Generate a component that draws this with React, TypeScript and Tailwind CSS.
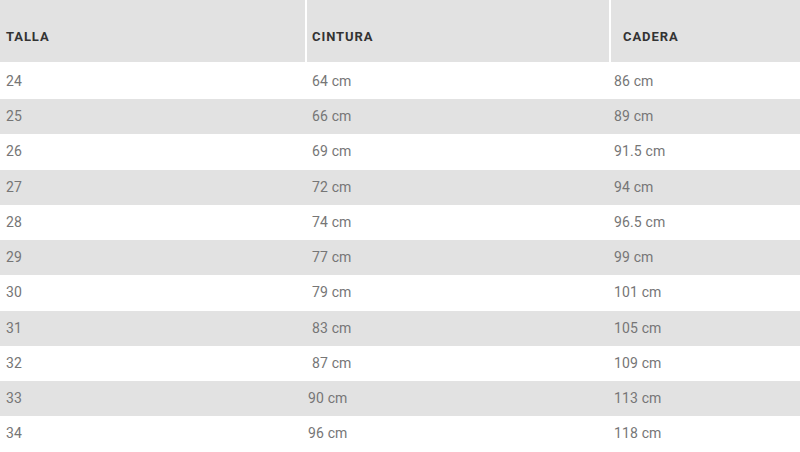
const ROWS = [
  { talla: '24', cintura: '64 cm', cadera: '86 cm' },
  { talla: '25', cintura: '66 cm', cadera: '89 cm' },
  { talla: '26', cintura: '69 cm', cadera: '91.5 cm' },
  { talla: '27', cintura: '72 cm', cadera: '94 cm' },
  { talla: '28', cintura: '74 cm', cadera: '96.5 cm' },
  { talla: '29', cintura: '77 cm', cadera: '99 cm' },
  { talla: '30', cintura: '79 cm', cadera: '101 cm' },
  { talla: '31', cintura: '83 cm', cadera: '105 cm' },
  { talla: '32', cintura: '87 cm', cadera: '109 cm' },
  { talla: '33', cintura: '90 cm', cadera: '113 cm', shift: true },
  { talla: '34', cintura: '96 cm', cadera: '118 cm', shift: true },
];

export default function App() {
  return (
    <div className="w-[800px] h-[452px] overflow-hidden bg-white font-['Roboto',sans-serif]">
      {/* header */}
      <div className="grid grid-cols-[305px_304px_191px] h-[62px] bg-[#e2e2e2] text-[13px] font-bold tracking-[0.07em] text-[#333] mb-[1.75px]">
        <div className="flex items-center pl-[6px] pt-[12px]">TALLA</div>
        <div className="flex items-center pl-[5px] pt-[12px] border-l-2 border-white">CINTURA</div>
        <div className="flex items-center pl-[12px] pt-[12px] border-l-2 border-white">CADERA</div>
      </div>

      {/* rows */}
      {ROWS.map((r, i) => (
        <div
          key={r.talla}
          className={
            'grid grid-cols-[305px_304px_191px] h-[35.25px] items-center text-[14px] tracking-[0.01em] text-[#767676] ' +
            (i % 2 === 1 ? 'bg-[#e2e2e2]' : 'bg-white')
          }
        >
          <div className="pl-[6px]">{r.talla}</div>
          <div className={r.shift ? 'pl-[3px]' : 'pl-[7px]'}>{r.cintura}</div>
          <div className="pl-[5px]">{r.cadera}</div>
        </div>
      ))}
    </div>
  );
}
